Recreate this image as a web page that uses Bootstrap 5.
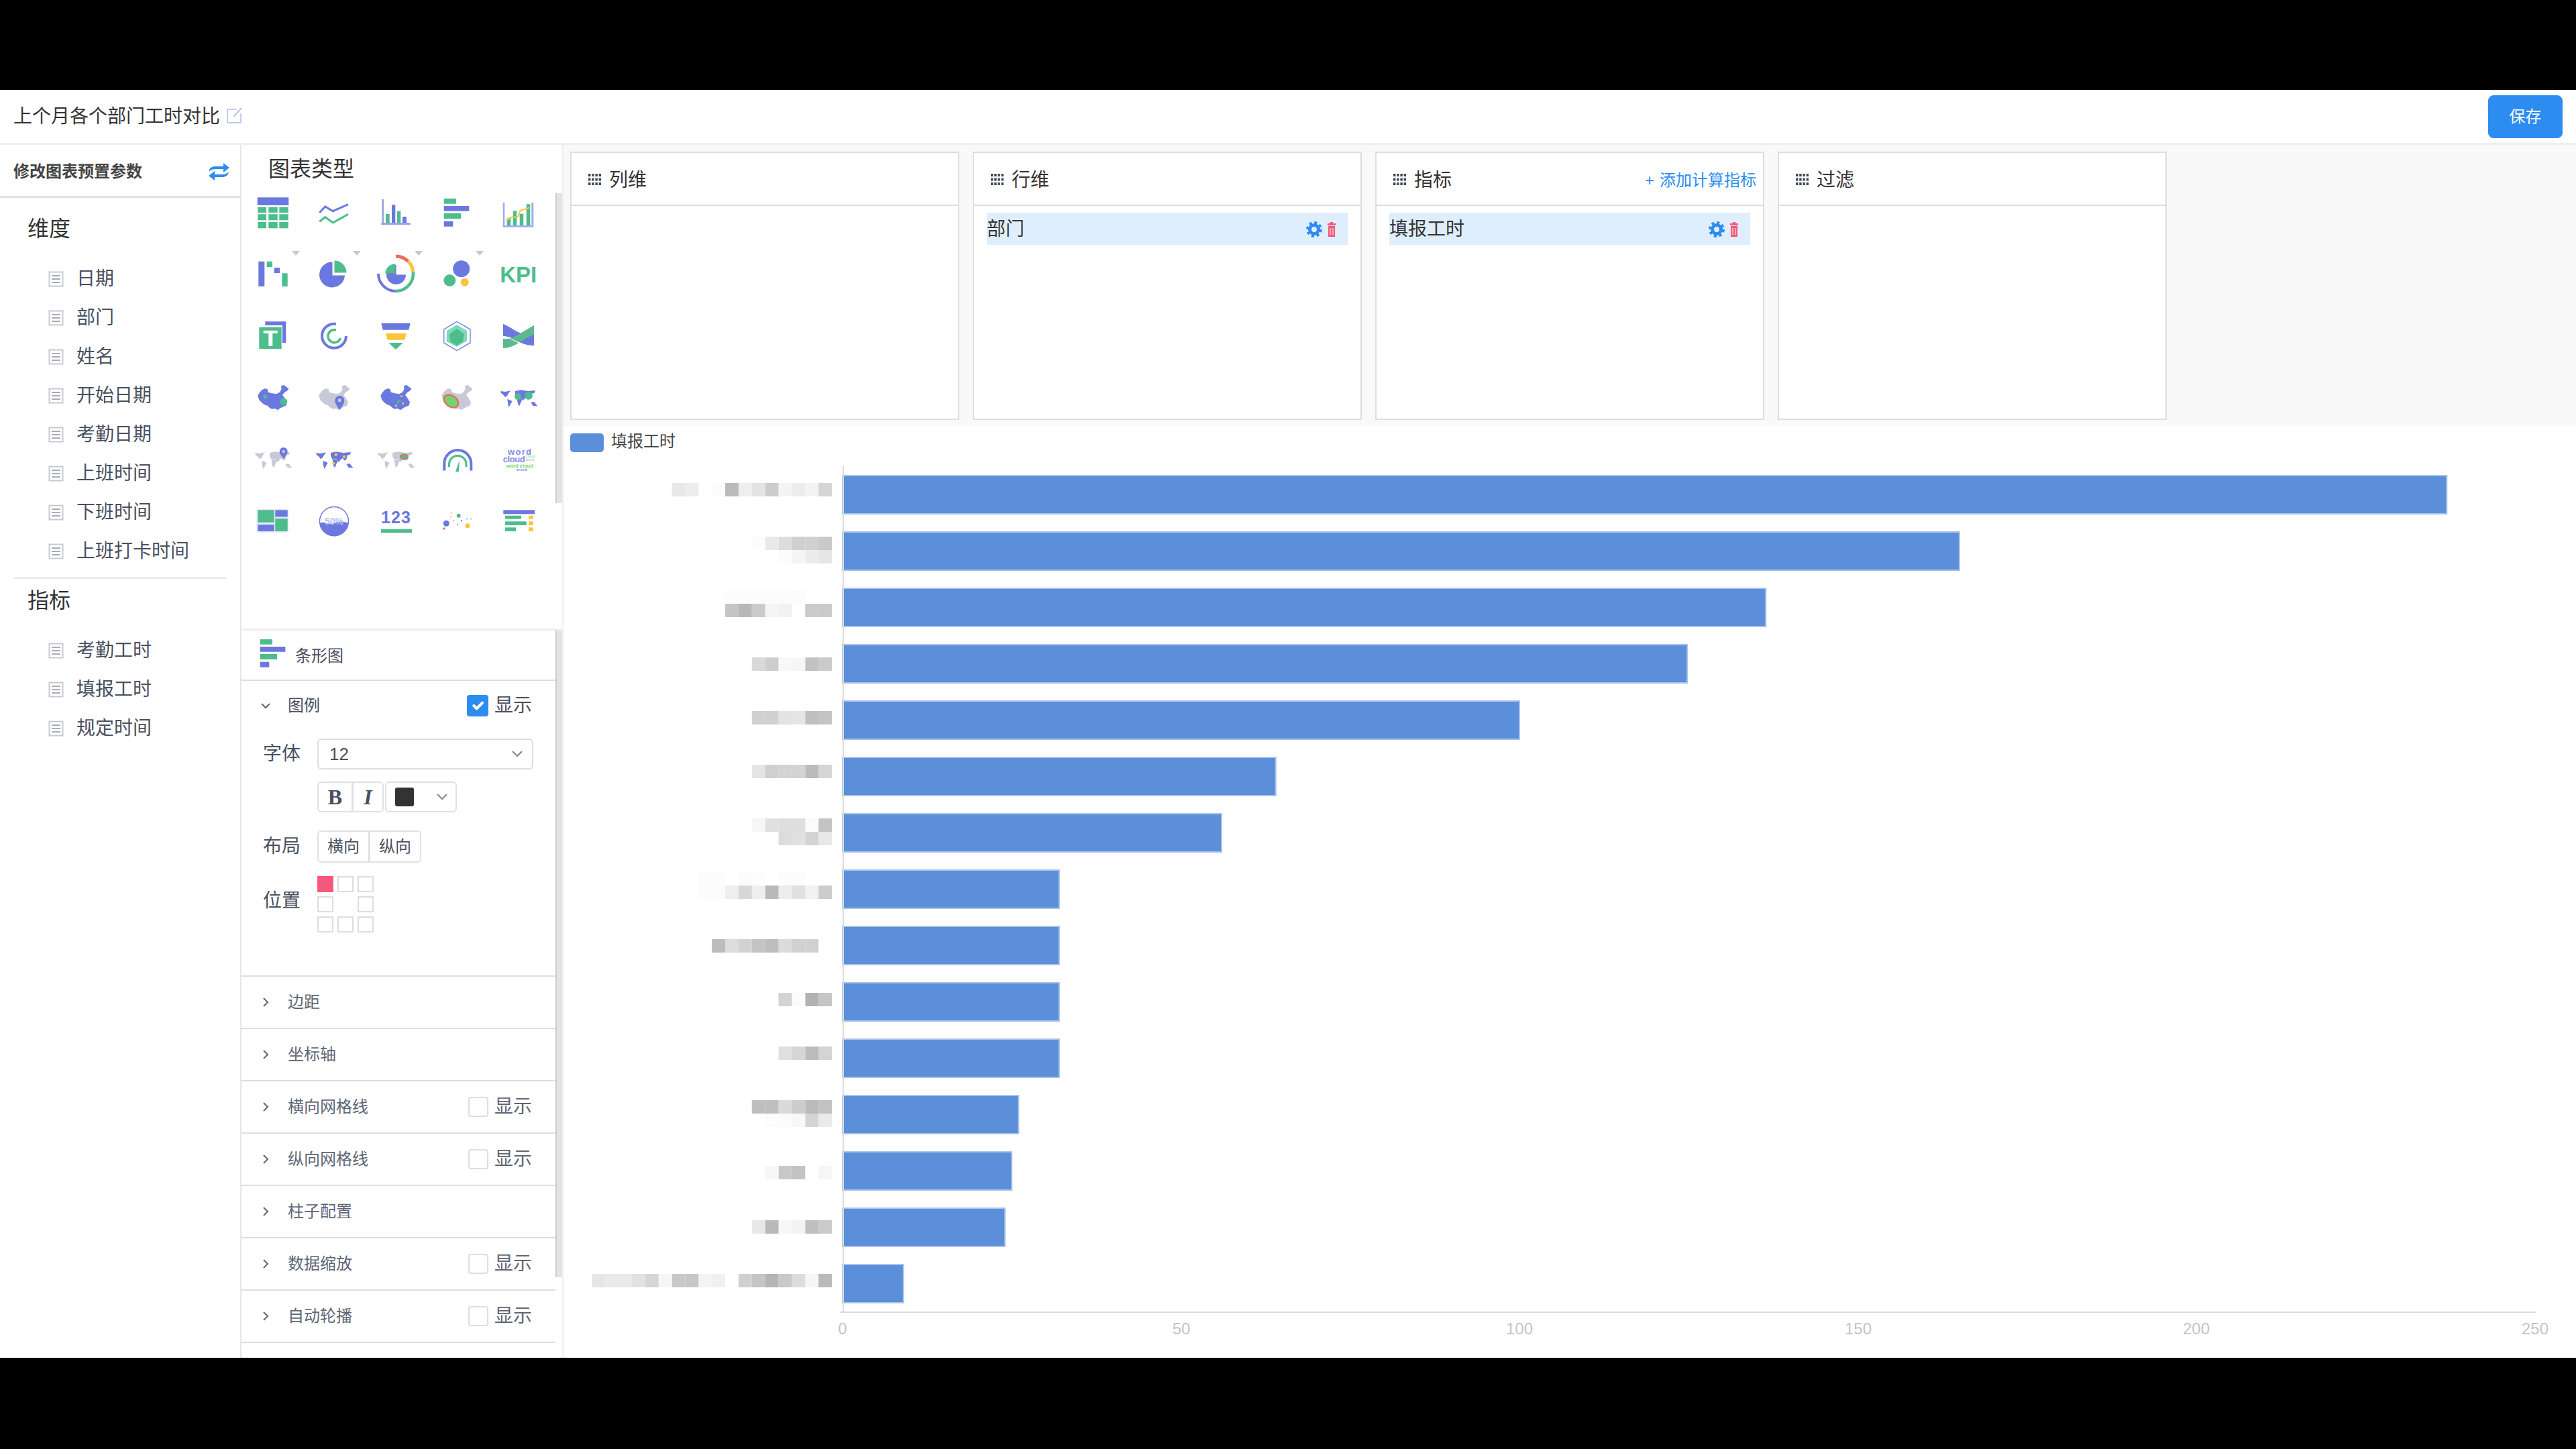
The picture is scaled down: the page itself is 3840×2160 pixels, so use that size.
<!DOCTYPE html>
<html lang="zh-CN">
<head>
<meta charset="UTF-8">
<title>上个月各个部门工时对比</title>
<link href="https://cdn.jsdelivr.net/npm/bootstrap@5.3.0/dist/css/bootstrap.min.css" rel="stylesheet">
<style>
    html, body { height: 100%; }
    body {
        background: #000;
        padding: 134px 0 136px;
        overflow: hidden;
        font-family: "Liberation Sans", "Noto Sans CJK SC", sans-serif;
        color: #495060;
    }
    .app { height: 1890px; background: #fff; }
    .top-bar { height: 82px; padding: 0 20px; border-bottom: 3px solid #eee; color: #333; font-size: 28px; }
    .save-btn { width: 111px; height: 64px; font-size: 24px; background: #2d8cf0; border-color: #2d8cf0; border-radius: 8px; padding: 0; }
    .edit-ico { width: 26px; height: 26px; margin: -4px 0 0 9px; }
    .main-row { height: 1808px; }

    .side-pane { width: 360px; border-right: 2px solid #e6e6e6; flex-shrink: 0; }
    .side-head { height: 79px; padding: 3px 14px 0 20px; border-bottom: 3px solid #e2e2e2; font-size: 24px; font-weight: 700; color: #444; }
    .side-title { font-size: 32px; color: #333; padding-left: 41px; line-height: 44px; }
    .title-dim { height: 92px; padding-top: 24px; }
    .title-kpi { height: 78px; padding-top: 10px; }
    .side-item { height: 58px; padding-left: 72px; font-size: 28px; gap: 19px; }
    .side-sep { height: 3px; margin: 9px 20px 0; background: #eee; }

    .mid-pane { width: 480px; border-right: 2px solid #eee; flex-shrink: 0; }
    .types { height: 724px; border-bottom: 3px solid #eee; padding-left: 1px; }
    .types-title { height: 55px; padding: 16px 0 0 39px; font-size: 32px; line-height: 40px; color: #333; }
    .types-grid { display: grid; grid-template-columns: repeat(5, 91.5px); grid-auto-rows: 92px; }
    .type-cell { display: flex; align-items: center; justify-content: center; position: relative; }
    .type-cell svg { width: 60px; height: 60px; }
    .type-cell.more::after { content: ""; position: absolute; top: 11px; right: 6px; border: 6px solid transparent; border-top: 7px solid #c8c8c8; border-bottom: 0; }
    .kpi-txt { font: 700 33px/1 "Liberation Sans Narrow", "Liberation Sans", sans-serif; color: #4dbd8c; white-space: nowrap; }
    .scroll-strip { position: absolute; right: 0; width: 10px; background: #e4e4e4; border-left: 2px solid #ccc; }
    .strip-a { top: 72px; height: 462px; }
    .strip-b { top: 0; height: 964px; }

    .settings { height: 1084px; overflow: hidden; width: 478px; }
    .settings-inner { width: 468px; }
    .chart-head { height: 75px; padding-left: 17px; border-bottom: 2px solid #dddee1; font-size: 24px; }
    .chart-head svg { width: 60px; height: 60px; margin-top: -6px; }
    .chart-head span { margin: 3px 0 0 3px; }
    .opt-row { height: 78px; padding: 0 35px 0 28px; border-bottom: 2px solid #dddee1; font-size: 24px; color: #5e6675; }
    .opt-row.open { height: 74px; border-bottom: 0; color: #495060; }
    .opt-chev { width: 16px; height: 16px; margin-right: 25px; flex-shrink: 0; }
    .show-check { gap: 9px; font-size: 28px; line-height: 1; }
    .show-check .form-check-input { width: 30px; height: 30px; margin: 0; border: 2px solid #dddee1; border-radius: 4px; }
    .show-check .form-check-input:checked { width: 32px; height: 32px; background-color: #2d8cf0; border-color: #2d8cf0; }
    .legend-box { height: 441px; border-bottom: 2px solid #dddee1; }
    .opt-line { padding-left: 32px; }
    .line-font { margin-top: 12px; }
    .line-style { margin-top: 18px; }
    .line-layout { margin-top: 27px; }
    .line-pos { margin-top: 20px; }
    .line-pos .opt-label { margin-top: -10px; }
    .opt-label { width: 81px; font-size: 28px; flex-shrink: 0; }
    .size-select {
        width: 322px; height: 46px; padding: 0 40px 0 16px; font-size: 26px; color: #495060;
        border: 2px solid #dddee1; border-radius: 6px; background-size: 20px 14px;
        background-image: url("data:image/svg+xml,%3csvg xmlns='http://www.w3.org/2000/svg' viewBox='0 0 20 14'%3e%3cpath fill='none' stroke='%237b8494' stroke-width='2' d='M3 3l7 7 7-7'/%3e%3c/svg%3e");
    }
    .tool-btn { height: 46px; padding: 0; background: #fff; border: 2px solid #e0e1e5; color: #495060; border-radius: 6px; display: flex; align-items: center; justify-content: center; }
    .tool-b { width: 53px; font: 700 32px "Liberation Serif", serif; }
    .tool-i { width: 47px; font: italic 700 32px "Liberation Serif", serif; }
    .tool-color { width: 107px; margin-left: 2px; justify-content: flex-start; padding-left: 13px; }
    .tool-color i { width: 28px; height: 28px; background: #333; border-radius: 3px; }
    .tool-color svg { width: 20px; height: 14px; margin-left: 32px; }
    .tool-txt { width: 78px; height: 48px; font-size: 24px; }
    .pos-grid { display: grid; grid-template-columns: repeat(3, 24px); grid-auto-rows: 24px; gap: 6px; }
    .pos-grid i { border: 2px solid #ddd; }
    .pos-grid i.on { background: #f5587b; border-color: #f5587b; }
    .pos-grid i.off { border: 0; }

    .work-area { flex: 1; min-width: 0; }
    .drop-band { height: 419px; background: #f9f9f9; padding: 10px 10px 9px; gap: 20px; }
    .drop-card { width: 580px; height: 400px; border: 2px solid #ddd; border-radius: 0; }
    .drop-head { height: 79px; padding: 5px 10px 0 25px; background: #fff; border-bottom: 2px solid #ddd; border-radius: 0 !important; font-size: 28px; color: #333; }
    .drop-head svg { width: 19px; height: 17px; margin: -3px 12px 0 0; }
    .add-calc { margin-left: auto; font-size: 24px; color: #2d8cf0; }
    .add-calc b { font-weight: 400; margin-right: 8px; }
    .drop-body { padding: 10px 19px; }
    .field-chip { height: 48px; background: #dfeefd; font-size: 28px; color: #333; padding: 2px 18px 0 0; }
    .field-chip svg { flex-shrink: 0; }
    .legend-row { height: 50px; padding: 11px 0 0 10px; font-size: 24px; color: #444; line-height: 1; }
    .legend-swatch { width: 50px; height: 28px; background: #5c8fd9; border-radius: 5px; margin-right: 11px; }
    .bar-chart { display: block; width: 3000px; height: 1339px; }
    .bar-chart text { font: 24px "Liberation Sans", sans-serif; fill: #c4c4c4; text-anchor: middle; }
</style>
</head>
<body>

<svg class="d-none">
    <symbol id="s-china" viewBox="0 0 60 60"><polygon points="7.3,26.7 9.3,23.3 13.3,18.3 18.3,16 21.7,17.3 22.7,21.7 28.3,23.3 35,24.3 40,21.7 42.7,16.7 41.7,12.7 46,10.7 50,14 53.3,16 51.7,19.3 47.3,21.7 44,26 46,28.3 48.3,31.7 51,36.7 49.3,41.7 45,43.3 40,46 36.7,48.3 33.3,46 28.3,46.7 25,45 21.7,41.7 16.7,40 13.3,37.3 9.3,33.3"/></symbol>
    <symbol id="s-world" viewBox="0 0 60 60"><polygon points="3.3,20 10,21 18.3,19.3 15,23.3 13.3,26.7 10,29.3 6.7,25 4,23.3"/><polygon points="13.3,31.7 20.7,35 17.7,40 15.7,44.3 14.3,40"/><polygon points="25,20 33.3,18.3 44,20 55,19 53.3,23.3 50,23.3 48.3,30 45,31.7 43,28 40,30 37,34 33.3,30 27.3,29 25,25"/><polygon points="27.5,29.5 34,31 35.5,33 33.3,36.7 31.7,41.7 29.3,40 28.3,35"/><polygon points="48.3,36.7 53.3,36 58.3,42.3 51.7,42.3"/></symbol>
    <symbol id="s-hbar" viewBox="0 0 60 60"><rect x="10.7" y="9" width="18.3" height="7.7" fill="#4dbd8c"/><rect x="10.7" y="20" width="37.6" height="7.7" fill="#6b78e0"/><rect x="10.7" y="31" width="25.3" height="8" fill="#4dbd8c"/><rect x="10.7" y="42.7" width="13.6" height="8" fill="#6b78e0"/></symbol>
    <symbol id="s-field" viewBox="0 0 23 24"><path d="M1.5 1.5h20v21h-20z" fill="none" stroke="#c8cad2" stroke-width="2"/><path d="M5 7h13M5 12h13M5 17h13" stroke="#a9adb8" stroke-width="2"/></symbol>
    <symbol id="s-grip" viewBox="0 0 19 17"><g fill="#3c4654"><rect x="0" y="0" width="3.4" height="4"/><rect x="5.2" y="0" width="3.4" height="4"/><rect x="10.4" y="0" width="3.4" height="4"/><rect x="15.6" y="0" width="3.4" height="4"/><rect x="0" y="6.5" width="3.4" height="4"/><rect x="5.2" y="6.5" width="3.4" height="4"/><rect x="10.4" y="6.5" width="3.4" height="4"/><rect x="15.6" y="6.5" width="3.4" height="4"/><rect x="0" y="13" width="3.4" height="4"/><rect x="5.2" y="13" width="3.4" height="4"/><rect x="10.4" y="13" width="3.4" height="4"/><rect x="15.6" y="13" width="3.4" height="4"/></g></symbol>
    <symbol id="s-right" viewBox="0 0 16 16"><path d="M5 2l6 6-6 6" fill="none" stroke="#5e6675" stroke-width="2"/></symbol>
    <symbol id="s-down" viewBox="0 0 16 16"><path d="M2 5l6 6 6-6" fill="none" stroke="#5e6675" stroke-width="2"/></symbol>
    <symbol id="s-gear" viewBox="0 0 24 24"><circle cx="12" cy="12" r="6.5" fill="none" stroke="#2d8cf0" stroke-width="5"/><circle cx="12" cy="12" r="10" fill="none" stroke="#2d8cf0" stroke-width="4" stroke-dasharray="4 3.85"/></symbol>
    <symbol id="s-trash" viewBox="0 0 12 24"><path d="M4 1h4v2h4v3H0V3h4zM1 7h10v16H1z" fill="#f5587b"/><path d="M4 10v10M8 10v10" stroke="#fbc4d0" stroke-width="1.5"/></symbol>
</svg>

<div class="app d-flex flex-column">
    <div class="top-bar d-flex align-items-center justify-content-between flex-shrink-0">
        <div class="d-flex align-items-center">
            <span>上个月各个部门工时对比</span>
            <svg class="edit-ico" viewBox="0 0 26 26"><path d="M16 4H2v20h20V10" fill="none" stroke="#c5c9f2" stroke-width="2"/><path d="M11 15L23 2" stroke="#b4c6f2" stroke-width="2"/></svg>
        </div>
        <button type="button" class="btn btn-primary save-btn">保存</button>
    </div>

    <div class="main-row d-flex">
        <!-- 左侧字段 -->
        <div class="side-pane">
            <div class="side-head d-flex align-items-center justify-content-between">
                <span>修改图表预置参数</span>
                <svg width="36" height="30" viewBox="0 0 36 30"><path d="M3 15c1-6 5-8 10-8h12V2l9 7-9 7v-5H13c-4 0-7 1-10 4z" fill="#2d8cf0"/><path d="M33 15c-1 6-5 8-10 8H12v5l-9-7 9-7v5h11c4 0 7-1 10-4z" fill="#2d8cf0"/></svg>
            </div>
            <div class="side-title title-dim">维度</div>
            <div class="side-item d-flex align-items-center"><svg width="23" height="24"><use href="#s-field"/></svg>日期</div>
            <div class="side-item d-flex align-items-center"><svg width="23" height="24"><use href="#s-field"/></svg>部门</div>
            <div class="side-item d-flex align-items-center"><svg width="23" height="24"><use href="#s-field"/></svg>姓名</div>
            <div class="side-item d-flex align-items-center"><svg width="23" height="24"><use href="#s-field"/></svg>开始日期</div>
            <div class="side-item d-flex align-items-center"><svg width="23" height="24"><use href="#s-field"/></svg>考勤日期</div>
            <div class="side-item d-flex align-items-center"><svg width="23" height="24"><use href="#s-field"/></svg>上班时间</div>
            <div class="side-item d-flex align-items-center"><svg width="23" height="24"><use href="#s-field"/></svg>下班时间</div>
            <div class="side-item d-flex align-items-center"><svg width="23" height="24"><use href="#s-field"/></svg>上班打卡时间</div>
            <div class="side-sep"></div>
            <div class="side-title title-kpi">指标</div>
            <div class="side-item d-flex align-items-center"><svg width="23" height="24"><use href="#s-field"/></svg>考勤工时</div>
            <div class="side-item d-flex align-items-center"><svg width="23" height="24"><use href="#s-field"/></svg>填报工时</div>
            <div class="side-item d-flex align-items-center"><svg width="23" height="24"><use href="#s-field"/></svg>规定时间</div>
        </div>

        <!-- 图表类型和配置 -->
        <div class="mid-pane">
            <div class="types position-relative">
                <div class="types-title">图表类型</div>
                <div class="types-grid">
                    <div class="type-cell"><svg viewBox="0 0 60 60"><rect x="6.7" y="7.3" width="46.6" height="11.7" fill="#6b78e0"/><g fill="#4dbd8c"><rect x="7.3" y="21.7" width="12.7" height="8.3"/><rect x="23.3" y="21.7" width="13.4" height="8.3"/><rect x="39.3" y="21.7" width="13.4" height="8.3"/><rect x="7.3" y="32.3" width="12.7" height="9"/><rect x="23.3" y="32.3" width="13.4" height="9"/><rect x="39.3" y="32.3" width="13.4" height="9"/><rect x="7.3" y="44" width="12.7" height="9.3"/><rect x="23.3" y="44" width="13.4" height="9.3"/><rect x="39.3" y="44" width="13.4" height="9.3"/></g></svg></div>
                    <div class="type-cell"><svg viewBox="0 0 60 60" fill="none" stroke-width="3"><path d="M8.3 30L16.7 21l11.6 6.7L51 17.7" stroke="#6b78e0"/><path d="M8.3 43.3l8.4-6.6L28.3 45 51 32.3" stroke="#4dbd8c"/></svg></div>
                    <div class="type-cell"><svg viewBox="0 0 60 60"><path d="M9.3 10H12v35h39.7v3.3H8.3V45h1z" fill="#9ba3ea"/><rect x="15" y="32" width="5.7" height="13" fill="#4dbd8c"/><rect x="24" y="18.3" width="5.3" height="26.7" fill="#6b78e0"/><rect x="32" y="27.7" width="5.3" height="17.3" fill="#4dbd8c"/><rect x="40" y="36" width="6" height="9" fill="#6b78e0"/></svg></div>
                    <div class="type-cell"><svg viewBox="0 0 60 60"><use href="#s-hbar"/></svg></div>
                    <div class="type-cell"><svg viewBox="0 0 60 60"><path d="M6.7 15h2.6v34h40V15h3v36.7H6.7z" fill="#a3aaec"/><g fill="#4dbd8c"><rect x="12.7" y="38.3" width="5.6" height="10.7"/><rect x="21.7" y="27.3" width="5.6" height="21.7"/><rect x="31.7" y="31.7" width="5.6" height="17.3"/><rect x="41.7" y="17.3" width="5.6" height="31.7"/></g><path d="M11.7 43.3c3-6 7-6.6 10-6.6s7 1 8.3-1.7 1-7 3.3-8.3 9-2 13.4-4.4" fill="none" stroke="#fcc33c" stroke-width="2"/></svg></div>

                    <div class="type-cell more"><svg viewBox="0 0 60 60"><rect x="8.3" y="10.7" width="9" height="37.3" fill="#6b78e0"/><rect x="20.7" y="10.7" width="8.3" height="8.3" fill="#4dbd8c"/><rect x="31.7" y="20" width="8.3" height="8" fill="#6b78e0"/><rect x="43.3" y="28.3" width="8.4" height="19.7" fill="#4dbd8c"/></svg></div>
                    <div class="type-cell more"><svg viewBox="0 0 60 60"><path d="M27.5 11.5V31.5H46A19 19 0 1 1 27.5 11.5Z" fill="#6b78e0"/><path d="M30.5 9.5A18 18 0 0 1 48.5 27.5H30.5Z" fill="#4dbd8c"/></svg></div>
                    <div class="type-cell more"><svg viewBox="0 0 60 60" fill="none"><path d="M30 3A26 26 0 0 1 48.4 10.6" stroke="#e8705a" stroke-width="5"/><path d="M48.4 10.6A26 26 0 0 1 55.9 26.7" stroke="#fcc33c" stroke-width="5"/><path d="M55.9 26.7A26 26 0 0 1 30 55" stroke="#4dbd8c" stroke-width="4.5"/><path d="M30 55A26 26 0 0 1 4 29" stroke="#6b78e0" stroke-width="4"/><path d="M30.5 16V30.5H45A14.5 14.5 0 1 1 30.5 16Z" fill="#6b78e0"/><path d="M29 14.5V28.5H14.5A14.5 14 0 0 1 29 14.5Z" fill="#4dbd8c"/></svg></div>
                    <div class="type-cell more"><svg viewBox="0 0 60 60"><circle cx="36.7" cy="21.7" r="12.5" fill="#6b78e0"/><circle cx="19.3" cy="39" r="9" fill="#4dbd8c"/><circle cx="41.7" cy="41.7" r="6" fill="#fcc33c"/></svg></div>
                    <div class="type-cell"><span class="kpi-txt">KPI</span></div>

                    <div class="type-cell"><svg viewBox="0 0 60 60"><path d="M18.3 8.3H49.3V40H44V14H18.3Z" fill="#6b78e0"/><rect x="9.3" y="16.7" width="33.4" height="32.3" fill="#4dbd8c"/><path d="M15.7 21.7h21V26h-7.4v19h-6V26h-7.6z" fill="#fff"/></svg></div>
                    <div class="type-cell"><svg viewBox="0 0 60 60" fill="none"><path d="M33 12A18 18 0 1 0 48 30" stroke="#6b78e0" stroke-width="4"/><path d="M33 21A9.5 9.5 0 1 0 39.5 33" stroke="#4dbd8c" stroke-width="3.5"/></svg></div>
                    <div class="type-cell"><svg viewBox="0 0 60 60"><polygon points="8.3,10.7 51.7,10.7 49.3,20.7 10.7,20.7" fill="#6b78e0"/><polygon points="15,26 46,26 43.3,35.7 17.3,35.7" fill="#fcc33c"/><polygon points="19.3,40 40.7,40 30,50" fill="#4dbd8c"/></svg></div>
                    <div class="type-cell"><svg viewBox="0 0 60 60"><polygon points="30,8.3 50,20 50,40 30,51.7 10.7,40 10.7,20" fill="none" stroke="#7f8ae6" stroke-width="1.5"/><polygon points="30,13 45,22 45,37 30,46 14.5,38 15,22" fill="#7ddcb8"/><polygon points="30,19 41,27 39,38 30,44 20,38 19,27" fill="#4dbd8c"/></svg></div>
                    <div class="type-cell"><svg viewBox="0 0 60 60"><path d="M7 12C22 18 32 30 53 28V44C34 46 24 30 7 30Z" fill="#6b78e0"/><path d="M7 34C22 36 34 24 53 14V28C38 32 26 48 7 48Z" fill="#5db88d"/><path d="M7 31C20 31 28 44 53 45" fill="none" stroke="#fff" stroke-width="1.2"/></svg></div>

                    <div class="type-cell"><svg viewBox="0 0 60 60"><use href="#s-china" fill="#6b78e0"/><circle cx="18.3" cy="28.3" r="3" fill="#4dbd8c"/><circle cx="46" cy="35.7" r="5.3" fill="#4dbd8c"/></svg></div>
                    <div class="type-cell"><svg viewBox="0 0 60 60"><use href="#s-china" fill="#c7c9d6"/><path d="M38.3 48c-5-7-7-10-7-14a7 7 0 0 1 14 0c0 4-2 7-7 14z" fill="#6b78e0"/><circle cx="38.3" cy="33.5" r="2.6" fill="#c7c9d6"/></svg></div>
                    <div class="type-cell"><svg viewBox="0 0 60 60"><use href="#s-china" fill="#6b78e0"/><g fill="#fcc33c"><rect x="37" y="26.5" width="3" height="2.5"/><rect x="29" y="40.5" width="3" height="2.5"/><rect x="39.5" y="37" width="2.5" height="3"/></g><path d="M30 38l6-6 2 2-6 5z" fill="#4dbd8c"/></svg></div>
                    <div class="type-cell"><svg viewBox="0 0 60 60"><use href="#s-china" fill="#c7c9d6"/><ellipse cx="21.5" cy="35" rx="13" ry="9.5" transform="rotate(35 21.5 35)" fill="#e8705a"/><ellipse cx="21.5" cy="35" rx="10.5" ry="7" transform="rotate(35 21.5 35)" fill="#6fd66f"/></svg></div>
                    <div class="type-cell"><svg viewBox="0 0 60 60"><use href="#s-world" fill="#6b78e0"/><circle cx="29" cy="28.3" r="5" fill="#4dbd8c"/><circle cx="45" cy="26.7" r="6" fill="#4dbd8c"/></svg></div>

                    <div class="type-cell"><svg viewBox="0 0 60 60"><use href="#s-world" fill="#c7c9d6"/><path d="M45.7 29c-4-5-6-8-6-11a6 6 0 0 1 12 0c0 3-2 6-6 11z" fill="#6b78e0"/><circle cx="45.7" cy="18" r="2.2" fill="#c7c9d6"/></svg></div>
                    <div class="type-cell"><svg viewBox="0 0 60 60"><use href="#s-world" fill="#6b78e0"/><g fill="#fcc33c"><circle cx="32.7" cy="22.7" r="2.2"/><circle cx="45" cy="26" r="2.2"/><circle cx="29.3" cy="35.7" r="2"/></g><circle cx="31.7" cy="29" r="1.8" fill="#4dbd8c"/></svg></div>
                    <div class="type-cell"><svg viewBox="0 0 60 60"><use href="#s-world" fill="#c7c9d6"/><ellipse cx="42.3" cy="26" rx="6.5" ry="4.8" fill="#e8705a"/><ellipse cx="42.3" cy="26" rx="5" ry="3.3" fill="#4dbd8c"/></svg></div>
                    <div class="type-cell"><svg viewBox="0 0 60 60" fill="none"><path d="M11.3 46.5V36A20 20 0 0 1 51.3 36V46.5" stroke="#6b78e0" stroke-width="4"/><path d="M18.5 41V36A12.8 12.8 0 0 1 44 36V41" stroke="#4dbd8c" stroke-width="3"/><polygon points="34,31 28,48 33,48" fill="#4dbd8c"/></svg></div>
                    <div class="type-cell"><svg viewBox="0 0 60 60" font-family="Liberation Sans"><text x="14" y="22.7" font-size="13" font-weight="700" fill="#7f8ae6" textLength="35">word</text><text x="6.7" y="34.3" font-size="13" font-weight="700" fill="#7f8ae6" textLength="33">cloud</text><text x="40.7" y="26.7" font-size="5" fill="#6fd66f" textLength="14">cloud</text><text x="40.7" y="31.7" font-size="5" fill="#6fd66f" textLength="12">word</text><text x="11.7" y="41.7" font-size="7.5" font-weight="700" fill="#6fd66f" textLength="40">word cloud</text><text x="27" y="46.7" font-size="6" font-weight="700" fill="#7f8ae6" textLength="16">word</text></svg></div>

                    <div class="type-cell"><svg viewBox="0 0 60 60"><rect x="5.3" y="11.7" width="48" height="35" fill="#e6e8fa"/><rect x="7.3" y="13.3" width="24.4" height="18.4" fill="#4dbd8c"/><rect x="7.3" y="35" width="24.4" height="10" fill="#6b78e0"/><rect x="33.3" y="13.3" width="18.4" height="10" fill="#6b78e0"/><rect x="33.3" y="26" width="18.4" height="19" fill="#4dbd8c"/></svg></div>
                    <div class="type-cell"><svg viewBox="0 0 60 60"><circle cx="30" cy="30" r="21.5" fill="none" stroke="#6b78e0" stroke-width="1.5"/><path d="M8.6 33C15 29 22 36 30 33S45 30 51.4 33A21.5 21.5 0 0 1 8.6 33Z" fill="#6b78e0"/><text x="30" y="35" font-size="14" font-weight="700" text-anchor="middle" fill="#b9bff2" font-family="Liberation Sans">50%</text></svg></div>
                    <div class="type-cell"><svg viewBox="0 0 60 60"><text x="8" y="33.3" font-size="25" font-weight="700" fill="#6b78e0" textLength="44" font-family="Liberation Sans">123</text><rect x="8" y="41.7" width="46" height="5.6" fill="#4dbd8c"/></svg></div>
                    <div class="type-cell"><svg viewBox="0 0 60 60"><circle cx="14.3" cy="33.3" r="4.5" fill="#6b78e0"/><circle cx="32.7" cy="21.7" r="3" fill="#4dbd8c"/><circle cx="46" cy="36.7" r="3.5" fill="#fcc33c"/><circle cx="11" cy="41" r="1.8" fill="#e8705a"/><circle cx="22" cy="17.5" r="1.5" fill="#f5d9a0"/><circle cx="21" cy="23" r="1.2" fill="#f5c2b8"/><circle cx="37" cy="29" r="1.2" fill="#e8705a"/><circle cx="25" cy="29" r="1.2" fill="#fcc33c"/><circle cx="45" cy="26.5" r="1" fill="#4dbd8c"/><circle cx="51" cy="26.5" r="1.2" fill="#f5c2b8"/><circle cx="31" cy="35" r="1.4" fill="#a9e0c7"/></svg></div>
                    <div class="type-cell"><svg viewBox="0 0 60 60"><rect x="7.3" y="13.3" width="46.7" height="6" fill="#6b78e0"/><g fill="#4dbd8c"><rect x="10" y="21.7" width="24" height="5"/><rect x="10" y="30.3" width="31.7" height="5.7"/><rect x="10" y="39.3" width="16" height="5.7"/></g><g fill="#fcc33c"><rect x="45" y="21.7" width="6.7" height="5"/><rect x="45" y="30.3" width="6.7" height="5.7"/><rect x="45" y="39.3" width="6.7" height="5.7"/></g></svg></div>
                </div>
                <div class="scroll-strip strip-a"></div>
            </div>

            <div class="settings position-relative">
                <div class="settings-inner">
                    <div class="chart-head d-flex align-items-center">
                        <svg viewBox="0 0 60 60"><use href="#s-hbar"/></svg>
                        <span>条形图</span>
                    </div>
                    <div class="legend-box">
                        <div class="opt-row open d-flex align-items-center">
                            <svg class="opt-chev"><use href="#s-down"/></svg>
                            <span>图例</span>
                            <label class="show-check d-flex align-items-center ms-auto">
                                <input class="form-check-input" type="checkbox" checked>显示
                            </label>
                        </div>
                        <div class="opt-line line-font d-flex align-items-center">
                            <span class="opt-label">字体</span>
                            <select class="form-select size-select"><option>12</option></select>
                        </div>
                        <div class="opt-line line-style d-flex align-items-center">
                            <span class="opt-label"></span>
                            <div class="btn-group">
                                <button type="button" class="btn tool-btn tool-b">B</button>
                                <button type="button" class="btn tool-btn tool-i">I</button>
                            </div>
                            <button type="button" class="btn tool-btn tool-color"><i></i><svg viewBox="0 0 20 14"><path d="M3 3l7 7 7-7" fill="none" stroke="#7b8494" stroke-width="2"/></svg></button>
                        </div>
                        <div class="opt-line line-layout d-flex align-items-center">
                            <span class="opt-label">布局</span>
                            <div class="btn-group">
                                <button type="button" class="btn tool-btn tool-txt">横向</button>
                                <button type="button" class="btn tool-btn tool-txt">纵向</button>
                            </div>
                        </div>
                        <div class="opt-line line-pos d-flex align-items-center">
                            <span class="opt-label">位置</span>
                            <div class="pos-grid">
                                <i class="on"></i><i></i><i></i>
                                <i></i><i class="off"></i><i></i>
                                <i></i><i></i><i></i>
                            </div>
                        </div>
                    </div>
                    <div class="opt-row d-flex align-items-center"><svg class="opt-chev"><use href="#s-right"/></svg><span>边距</span></div>
                    <div class="opt-row d-flex align-items-center"><svg class="opt-chev"><use href="#s-right"/></svg><span>坐标轴</span></div>
                    <div class="opt-row d-flex align-items-center"><svg class="opt-chev"><use href="#s-right"/></svg><span>横向网格线</span>
                        <label class="show-check d-flex align-items-center ms-auto"><input class="form-check-input" type="checkbox">显示</label></div>
                    <div class="opt-row d-flex align-items-center"><svg class="opt-chev"><use href="#s-right"/></svg><span>纵向网格线</span>
                        <label class="show-check d-flex align-items-center ms-auto"><input class="form-check-input" type="checkbox">显示</label></div>
                    <div class="opt-row d-flex align-items-center"><svg class="opt-chev"><use href="#s-right"/></svg><span>柱子配置</span></div>
                    <div class="opt-row d-flex align-items-center"><svg class="opt-chev"><use href="#s-right"/></svg><span>数据缩放</span>
                        <label class="show-check d-flex align-items-center ms-auto"><input class="form-check-input" type="checkbox">显示</label></div>
                    <div class="opt-row d-flex align-items-center"><svg class="opt-chev"><use href="#s-right"/></svg><span>自动轮播</span>
                        <label class="show-check d-flex align-items-center ms-auto"><input class="form-check-input" type="checkbox">显示</label></div>
                </div>
                <div class="scroll-strip strip-b"></div>
            </div>
        </div>

        <!-- 维度区和图表 -->
        <div class="work-area">
            <div class="drop-band d-flex">
                <div class="card drop-card">
                    <div class="card-header drop-head d-flex align-items-center"><svg><use href="#s-grip"/></svg>列维</div>
                </div>
                <div class="card drop-card">
                    <div class="card-header drop-head d-flex align-items-center"><svg><use href="#s-grip"/></svg>行维</div>
                    <div class="card-body drop-body">
                        <div class="field-chip d-flex align-items-center gap-2">
                            <span class="me-auto">部门</span>
                            <svg width="24" height="24"><use href="#s-gear"/></svg>
                            <svg width="12" height="24"><use href="#s-trash"/></svg>
                        </div>
                    </div>
                </div>
                <div class="card drop-card">
                    <div class="card-header drop-head d-flex align-items-center"><svg><use href="#s-grip"/></svg>指标<span class="add-calc"><b>+</b>添加计算指标</span></div>
                    <div class="card-body drop-body">
                        <div class="field-chip d-flex align-items-center gap-2">
                            <span class="me-auto">填报工时</span>
                            <svg width="24" height="24"><use href="#s-gear"/></svg>
                            <svg width="12" height="24"><use href="#s-trash"/></svg>
                        </div>
                    </div>
                </div>
                <div class="card drop-card">
                    <div class="card-header drop-head d-flex align-items-center"><svg><use href="#s-grip"/></svg>过滤</div>
                </div>
            </div>
            <div class="legend-row d-flex align-items-start">
                <span class="legend-swatch"></span><span>填报工时</span>
            </div>
            <svg id="barChart" class="bar-chart" viewBox="840 685 3000 1339">
                <g id="chartMarks"></g>
                <path d="M1257 694V1956M1252 1956H3780" fill="none" stroke="#ddd" stroke-width="2"/>
                <text x="1256" y="1989">0</text>
                <text x="1761" y="1989">50</text>
                <text x="2265" y="1989">100</text>
                <text x="2770" y="1989">150</text>
                <text x="3274" y="1989">200</text>
                <text x="3779" y="1989">250</text>
            </svg>
        </div>
    </div>
</div>

<script src="https://cdn.jsdelivr.net/npm/bootstrap@5.3.0/dist/js/bootstrap.bundle.min.js"></script>
<script>
    // bar values, top to bottom
    const values = [237, 165, 136.4, 124.8, 100, 64, 56, 32, 32, 32, 32, 26, 25, 24, 9];
    const pxPerUnit = 10.09;

    // blurred category labels: [y, grey cells, right aligned]
    const labels = [
        [720, 'e8 ed ff fb ba ee e3 cc f4 ec f3 d5'],
        [800, 'fc e9 dc d0 d0 c9'], [820, 'fc f5 ec e6'],
        [880, 'fc fc fc fc fc fb ff ff'], [900, 'c5 b8 cb f5 f2 ff ca ca'],
        [980, 'd9 cd f8 f6 c2 cb'],
        [1060, 'd0 d0 e3 e5 bf c4'],
        [1140, 'e4 cf d3 d3 bb d6'],
        [1220, 'f6 e0 de de fb c4'], [1240, 'dc e0 d3 e8'],
        [1300, 'fc fc ff fb fd ff fc fc ff ff'], [1320, 'fc fb ef d7 ee b9 ec e0 f1 cc'],
        [1400, 'bc dc d2 c4 bd db d1 d1 ff'],
        [1480, 'd3 fb b2 c5'],
        [1560, 'df d6 bc d4'],
        [1640, 'bf bf da cc ba c2'], [1660, 'fc fb f7 d4 ea'],
        [1738, 'f7 c8 c3 ff f6'],
        [1819, 'e8 b9 f7 f3 bf ca'],
        [1899, 'e6 ea ea e2 d6 f6 c8 c6 f3 f0 ff d0 c5 b5 c9 dc f6 ba']
    ];

    let marks = '';
    values.forEach(function(v, i) {
        const y = 709 + i * 84;
        marks += `<rect x="1256" y="${y}" width="${v * pxPerUnit}" height="57" fill="#5c8fd9" stroke="#a9c4ec" stroke-width="2"/>`;
    });
    labels.forEach(function(row) {
        const cells = row[1].split(' ').reverse();
        cells.forEach(function(c, i) {
            if (c === 'ff') return;
            const x = 1240 - (i + 1) * 19.87;
            marks += `<rect x="${x}" y="${row[0]}" width="19.87" height="20" fill="#${c}${c}${c}"/>`;
        });
    });
    document.getElementById('chartMarks').innerHTML = marks;
</script>
</body>
</html>
